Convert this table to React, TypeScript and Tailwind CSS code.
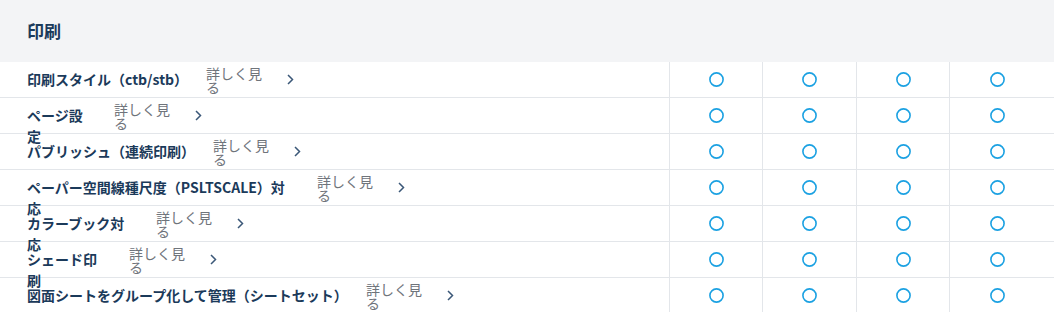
import React from 'react';

interface Feature {
  lines: string[];
  titleW: string; // box width of the title, decides where the link sits
}

const features: Feature[] = [
  { lines: ['印刷スタイル（ctb/stb）'], titleW: 'w-[163px]' },
  { lines: ['ページ設', '定'], titleW: 'w-[71px]' },
  { lines: ['パブリッシュ（連続印刷）'], titleW: 'w-[170px]' },
  { lines: ['ペーパー空間線種尺度（PSLTSCALE）対', '応'], titleW: 'w-[274px]' },
  { lines: ['カラーブック対', '応'], titleW: 'w-[113px]' },
  { lines: ['シェード印', '刷'], titleW: 'w-[86px]' },
  { lines: ['図面シートをグループ化して管理（シートセット）'], titleW: 'w-[323px]' },
];

const Check = () => (
  <svg width="15" height="15" viewBox="0 0 15 15" fill="none">
    <circle cx="7.5" cy="7.5" r="6.6" stroke="#1ba1e2" strokeWidth="1.6" />
  </svg>
);

const Chevron = () => (
  <svg width="7" height="11" viewBox="0 0 7 11" fill="none" className="ml-[21px] shrink-0">
    <path d="M1 1l4.5 4.5L1 10" stroke="#3b5878" strokeWidth="1.5" />
  </svg>
);

const Row = ({ f }: { f: Feature }) => (
  <div className="grid grid-cols-[669px_93px_94px_93px_95px_1fr] h-[36px] border-b border-[#e3e6ea]">
    <div className="flex items-center pl-[27px]">
      <div className={`${f.titleW} h-[21px] shrink-0 text-[14px] leading-[21px] font-bold text-[#1b3a5a] relative z-10`}>
        {f.lines.map((l) => (
          <div key={l} className="whitespace-nowrap">{l}</div>
        ))}
      </div>
      <a className="ml-4 w-[60px] shrink-0 text-[14px] leading-[14px] text-[#6f747b]">詳しく見る</a>
      <Chevron />
    </div>
    {[0, 1, 2, 3].map((i) => (
      <div key={i} className="border-l border-[#e3e6ea] flex items-center justify-center">
        <Check />
      </div>
    ))}
    <div />
  </div>
);

export default function App() {
  return (
    <div className="w-[1054px] h-[312px] overflow-hidden bg-white font-['Noto_Sans_CJK_JP','Noto_Sans',sans-serif]">
      <div className="h-[62px] bg-[#f3f4f6] flex items-center pl-[27px]">
        <h2 className="text-[17px] font-bold text-[#1b3a5a] leading-none -mt-[1px]">印刷</h2>
      </div>
      {features.map((f, i) => (
        <Row key={i} f={f} />
      ))}
    </div>
  );
}
